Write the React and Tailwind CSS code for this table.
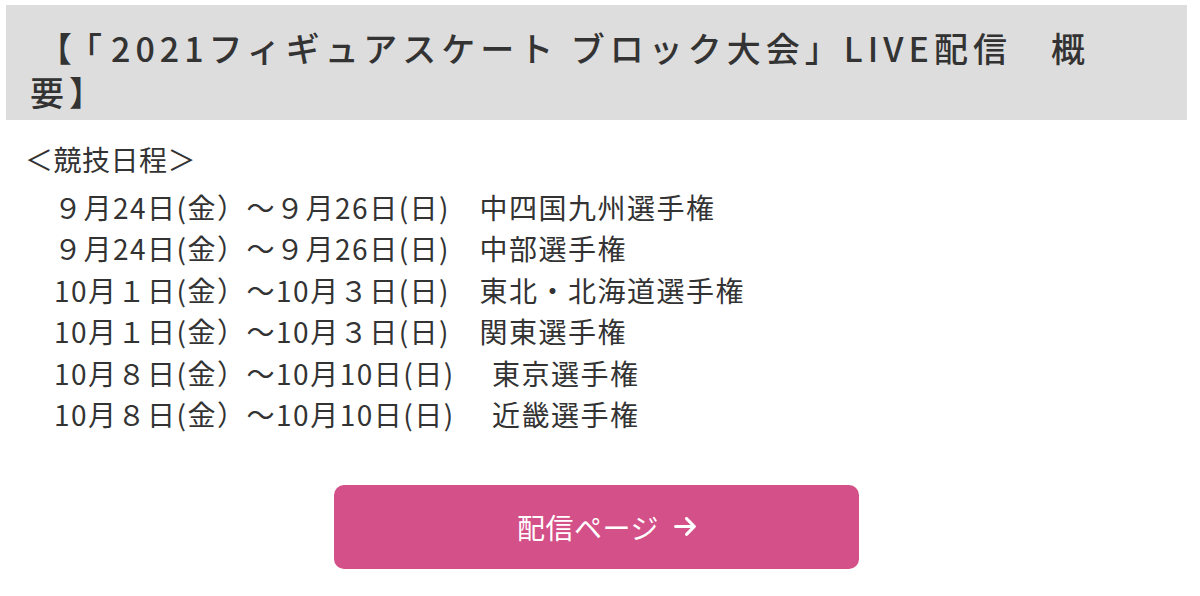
const rows = [
  { date: "９月24日(金）～９月26日(日)", name: "中四国九州選手権" },
  { date: "９月24日(金）～９月26日(日)", name: "中部選手権" },
  { date: "10月１日(金）～10月３日(日)", name: "東北・北海道選手権" },
  { date: "10月１日(金）～10月３日(日)", name: "関東選手権" },
  { date: "10月８日(金）～10月10日(日)", name: " 東京選手権" },
  { date: "10月８日(金）～10月10日(日)", name: " 近畿選手権" },
];

function ArrowIcon() {
  return (
    <svg width="22" height="25" viewBox="0 0 448 512" fill="currentColor">
      <path d="M438.6 278.6c12.5-12.5 12.5-32.8 0-45.3l-160-160c-12.5-12.5-32.8-12.5-45.3 0s-12.5 32.8 0 45.3L338.8 224 32 224c-17.7 0-32 14.3-32 32s14.3 32 32 32l306.7 0L233.4 393.4c-12.5 12.5-12.5 32.8 0 45.3s32.8 12.5 45.3 0l160-160z" />
    </svg>
  );
}

export default function App() {
  return (
    <div
      className="w-[1200px] h-[596px] bg-white pl-[6px] pr-[13px] pt-[5px] text-[#333333]"
      style={{ fontFamily: '"Noto Sans CJK JP", "Noto Sans", sans-serif' }}
    >
      <div className="bg-[#dddddd] pl-[24px] pr-[24px] pt-[21px] pb-[6px]">
        <h1 className="text-[34px] leading-[44px] font-medium tracking-[5px] text-[#333333]">
          <span className="ml-[8px] tracking-[13px]">【</span>
          <span className="tracking-[9px]">「</span>
          2021フィギュアスケート ブロック大会」LIVE配信　概<br />要】
        </h1>
      </div>

      <div className="mt-[19px] pl-[19px] text-[28px] leading-[41.5px] text-[#333333]">
        <p className="mb-[6px] tracking-[0.5px]">＜競技日程＞</p>
        <ul className="pl-[29px] tracking-[1.5px]">
          {rows.map((r, i) => (
            <li key={i} className="whitespace-pre">
              {r.date}
              {"　"}
              {r.name}
            </li>
          ))}
        </ul>
      </div>

      <div className="mt-[49px] flex justify-center">
        <button className="flex h-[84px] w-[525px] items-center justify-center gap-[15px] rounded-[10px] bg-[#d45088] pl-[20px] text-[28px] text-white">
          <span className="tracking-[0.5px]">配信ページ</span>
          <ArrowIcon />
        </button>
      </div>
    </div>
  );
}
